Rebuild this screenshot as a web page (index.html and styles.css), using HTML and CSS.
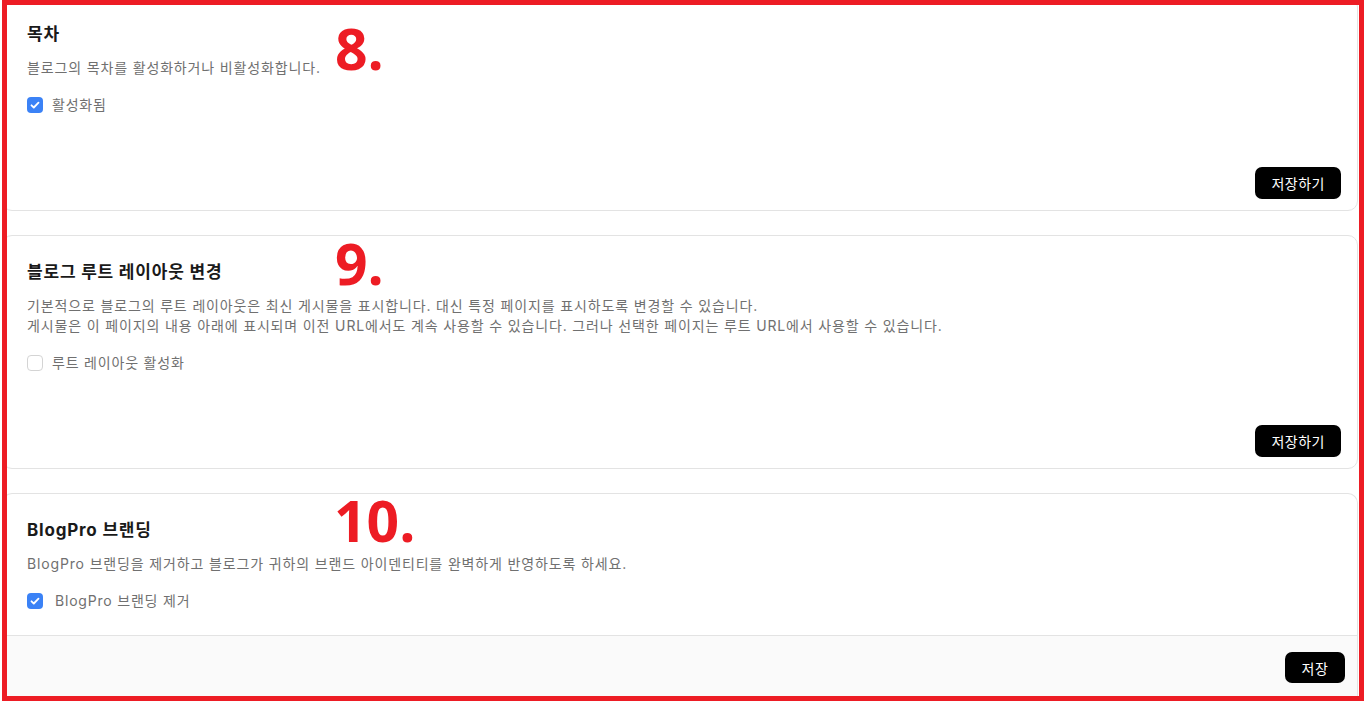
FILE: index.html
```html
<!DOCTYPE html>
<html lang="ko">
<head>
<meta charset="utf-8">
<link rel="stylesheet" href="styles.css">
</head>
<body>
<div class="page">
  <section class="card card-first">
    <div class="card-body">
      <h2 class="title">목차</h2>
      <p class="desc">블로그의 목차를 활성화하거나 비활성화합니다.</p>
      <label class="check">
        <span class="box checked"><svg viewBox="0 0 16 16" width="16" height="16"><path d="M4.5 8.3l2.3 2.2 4.7-4.8" fill="none" stroke="#fff" stroke-width="1.8" stroke-linecap="round" stroke-linejoin="round"/></svg></span>
        <span class="check-label">활성화됨</span>
      </label>
    </div>
    <div class="card-foot">
      <button class="btn">저장하기</button>
    </div>
  </section>

  <section class="card">
    <div class="card-body">
      <h2 class="title">블로그 루트 레이아웃 변경</h2>
      <p class="desc">기본적으로 블로그의 루트 레이아웃은 최신 게시물을 표시합니다. 대신 특정 페이지를 표시하도록 변경할 수 있습니다.<br>게시물은 이 페이지의 내용 아래에 표시되며 이전 URL에서도 계속 사용할 수 있습니다. 그러나 선택한 페이지는 루트 URL에서 사용할 수 있습니다.</p>
      <label class="check">
        <span class="box"></span>
        <span class="check-label">루트 레이아웃 활성화</span>
      </label>
    </div>
    <div class="card-foot">
      <button class="btn">저장하기</button>
    </div>
  </section>

  <section class="card card-last">
    <div class="card-body">
      <h2 class="title">BlogPro 브랜딩</h2>
      <p class="desc">BlogPro 브랜딩을 제거하고 블로그가 귀하의 브랜드 아이덴티티를 완벽하게 반영하도록 하세요.</p>
      <label class="check wide">
        <span class="box checked"><svg viewBox="0 0 16 16" width="16" height="16"><path d="M4.5 8.3l2.3 2.2 4.7-4.8" fill="none" stroke="#fff" stroke-width="1.8" stroke-linecap="round" stroke-linejoin="round"/></svg></span>
        <span class="check-label">BlogPro 브랜딩 제거</span>
      </label>
    </div>
    <div class="card-foot gray">
      <button class="btn small">저장</button>
    </div>
  </section>

  <div class="num n8">8.</div>
  <div class="num n9">9.</div>
  <div class="num n10">10.</div>
  <div class="frame"></div>
</div>
</body>
</html>
```

FILE: styles.css
```css
* { box-sizing: border-box; }
html, body {
  margin: 0;
  padding: 0;
  background: #fff;
}
body {
  font-family: Inter, "Noto Sans CJK KR", sans-serif;
  color: #1a1a1a;
  width: 1364px;
  height: 701px;
  overflow: hidden;
}
.page {
  position: relative;
  width: 1364px;
  height: 701px;
  padding: 0 6px 0 2px;
  display: flex;
  flex-direction: column;
  gap: 24px;
}
.card {
  border: 1px solid #e3e3e3;
  border-radius: 10px;
  background: #fff;
  display: flex;
  flex-direction: column;
}
.card-first {
  margin-top: -3px;
}
.card-last {
  flex: 1;
  border-bottom: none;
  border-radius: 10px 10px 0 0;
}
.card-body {
  padding: 23px 24px 0 24px;
  display: flex;
  flex-direction: column;
}
.title {
  margin: 0;
  font-size: 17px;
  line-height: 26px;
  font-weight: 700;
  color: #1a1a1a;
  letter-spacing: 0.8px;
}
.desc {
  margin: 11px 0 0 0;
  font-size: 14px;
  line-height: 20px;
  color: #707070;
  letter-spacing: 0.85px;
}
.check {
  margin-top: 17px;
  display: flex;
  align-items: center;
  gap: 9px;
  font-size: 14px;
  line-height: 20px;
  color: #707070;
}
.check.wide { gap: 12px; }
.box {
  width: 16px;
  height: 16px;
  border-radius: 4px;
  border: 1px solid #d4d4d4;
  background: #fff;
  display: flex;
  align-items: center;
  justify-content: center;
}
.box.checked {
  border: none;
  background: #3b82f6;
}
.check-label { letter-spacing: 0.8px; }
.card-foot {
  margin-top: auto;
  padding: 52px 16px 11px 16px;
  display: flex;
  justify-content: flex-end;
}
.card-foot.gray {
  margin-top: 24px;
  flex: 1;
  padding: 16px 12px 0 16px;
  background: #fafafa;
  border-top: 1px solid #e3e3e3;
  align-items: flex-start;
}
.btn {
  height: 32px;
  padding: 0 16px;
  border: none;
  border-radius: 7px;
  background: #000;
  color: #fff;
  font-family: Inter, "Noto Sans CJK KR", sans-serif;
  font-size: 14px;
  font-weight: 400;
  letter-spacing: 0.5px;
  cursor: pointer;
}
.btn.small {
  height: 31px;
  width: 60px;
  padding: 0;
}
.num {
  position: absolute;
  font-family: "Open Sans", "DejaVu Sans", sans-serif;
  font-weight: 700;
  font-size: 57px;
  line-height: 1;
  color: #ed1c24;
}
.n8 { left: 335px; top: 20px; }
.n9 { left: 335px; top: 235px; }
.n10 { left: 334px; top: 492px; }
.frame {
  position: absolute;
  left: 2px;
  top: 0;
  width: 1362px;
  height: 701px;
  border: 5px solid #ed1c24;
  pointer-events: none;
}
```
